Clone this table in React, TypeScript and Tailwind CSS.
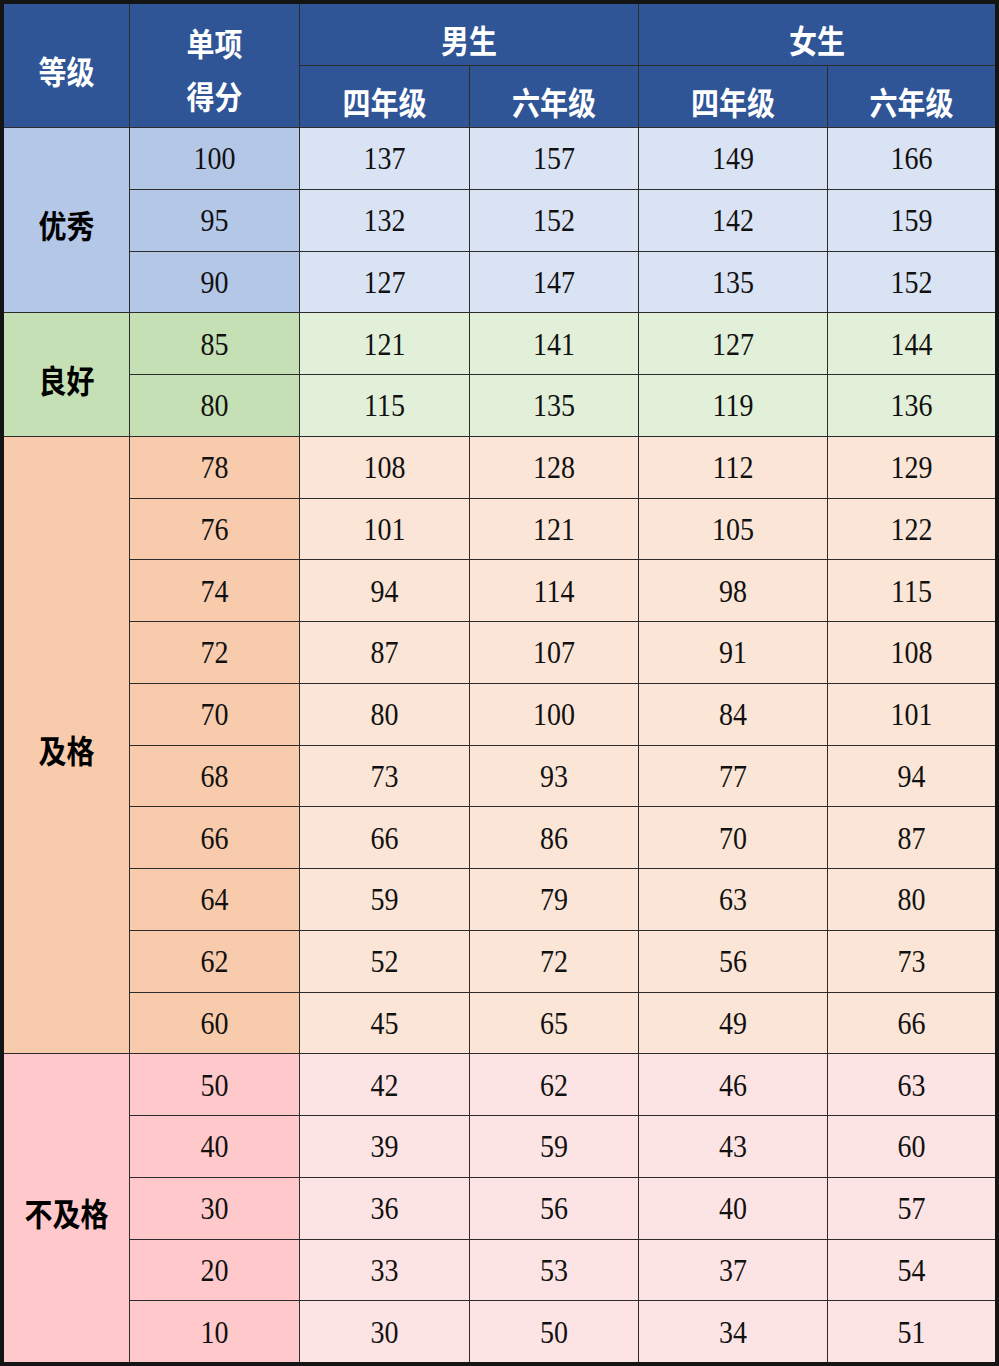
import React from "react";

type Group = {
  label: string;
  key: string;
  cell: string;
  rows: number[][];
  span: string;
};

const groups: Group[] = [
  {
    label: "优秀",
    key: "bg-[#b4c7e7]",
    cell: "bg-[#dae3f3]",
    span: "row-span-3",
    rows: [
      [100, 137, 157, 149, 166],
      [95, 132, 152, 142, 159],
      [90, 127, 147, 135, 152],
    ],
  },
  {
    label: "良好",
    key: "bg-[#c5e0b4]",
    cell: "bg-[#e2f0d9]",
    span: "row-span-2",
    rows: [
      [85, 121, 141, 127, 144],
      [80, 115, 135, 119, 136],
    ],
  },
  {
    label: "及格",
    key: "bg-[#f8cbad]",
    cell: "bg-[#fbe5d6]",
    span: "row-span-10",
    rows: [
      [78, 108, 128, 112, 129],
      [76, 101, 121, 105, 122],
      [74, 94, 114, 98, 115],
      [72, 87, 107, 91, 108],
      [70, 80, 100, 84, 101],
      [68, 73, 93, 77, 94],
      [66, 66, 86, 70, 87],
      [64, 59, 79, 63, 80],
      [62, 52, 72, 56, 73],
      [60, 45, 65, 49, 66],
    ],
  },
  {
    label: "不及格",
    key: "bg-[#ffc9cb]",
    cell: "bg-[#fde4e4]",
    span: "row-span-5",
    rows: [
      [50, 42, 62, 46, 63],
      [40, 39, 59, 43, 60],
      [30, 36, 56, 40, 57],
      [20, 33, 53, 37, 54],
      [10, 30, 50, 34, 51],
    ],
  },
];

const cjk = "font-['Noto_Sans_CJK_SC',sans-serif] font-bold text-[28px]";
const num = "font-['Liberation_Serif',serif] text-[28px] text-[#111]";
const head = `bg-[#2f5597] text-white flex items-center justify-center ${cjk}`;

// the source picture is a little stretched vertically
function T({ children }: { children: React.ReactNode }) {
  return <span className="inline-block scale-y-[1.13]">{children}</span>;
}

export default function App() {
  return (
    <div className="w-[999px] h-[1366px] bg-white">
      <div className="w-[999px] h-[1366px] border-[4px] border-[#141414] bg-[#2c2c2c] grid grid-cols-[125px_169px_169px_168px_188px_167px] grid-rows-[61px_61px_repeat(20,1fr)] gap-px">
        <div className={`${head} row-span-2 pt-2`}>
          <T>等级</T>
        </div>
        <div className={`${head} row-span-2 flex-col leading-[53px] pt-2`}>
          <T>单项</T>
          <T>得分</T>
        </div>
        <div className={`${head} col-span-2 pt-2`}>
          <T>男生</T>
        </div>
        <div className={`${head} col-span-2 pt-2`}>
          <T>女生</T>
        </div>
        <div className={`${head} pt-2`}>
          <T>四年级</T>
        </div>
        <div className={`${head} pt-2`}>
          <T>六年级</T>
        </div>
        <div className={`${head} pt-2`}>
          <T>四年级</T>
        </div>
        <div className={`${head} pt-2`}>
          <T>六年级</T>
        </div>

        {groups.map((g) => (
          <React.Fragment key={g.label}>
            <div
              className={`${g.key} ${g.span} col-start-1 flex items-center justify-center pt-2 text-black ${cjk}`}
            >
              <T>{g.label}</T>
            </div>
            {g.rows.map((r, i) =>
              r.map((v, j) => (
                <div
                  key={`${g.label}-${i}-${j}`}
                  className={`${j === 0 ? g.key : g.cell} flex items-center justify-center pt-0.5 ${num}`}
                >
                  <T>{v}</T>
                </div>
              ))
            )}
          </React.Fragment>
        ))}
      </div>
    </div>
  );
}
